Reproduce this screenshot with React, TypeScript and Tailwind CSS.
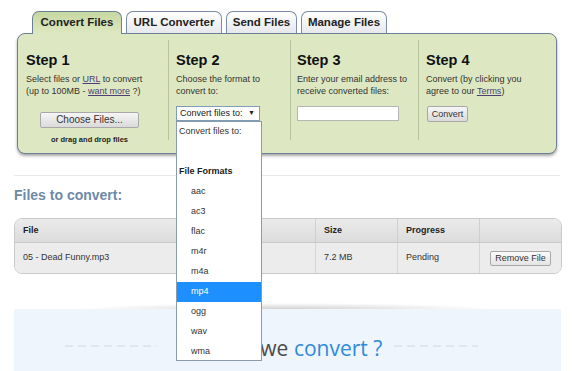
import React from 'react'

const tabs = [
  { label: 'Convert Files', w: 'w-[90px]', active: true },
  { label: 'URL Converter', w: 'w-[96px]', active: false },
  { label: 'Send Files', w: 'w-[71px]', active: false },
  { label: 'Manage Files', w: 'w-[86px]', active: false },
]

const formats = ['aac', 'ac3', 'flac', 'm4r', 'm4a', 'mp4', 'ogg', 'wav', 'wma']

function Dashes({ width }: { width: number }) {
  return (
    <svg width={width} height="2" className="block">
      <line x1="0" y1="1" x2={width} y2="1" stroke="#cfd8e2" strokeWidth="1" strokeDasharray="8 5" />
    </svg>
  )
}

export default function App() {
  return (
    <div className="relative w-[574px] h-[371px] overflow-hidden bg-white text-[#333] [font-family:'Liberation_Sans',Arial,sans-serif]">
      {/* Tabs */}
      <div className="pt-[11px]">
        <div className="flex items-start gap-[4px] pl-[32px] h-[23px]">
          {tabs.map((t) =>
            t.active ? (
              <div
                key={t.label}
                className={`relative z-10 ${t.w} h-[23px] flex items-center justify-center rounded-t-[7px] border border-b-0 border-[#6b7f98] bg-gradient-to-b from-[#c7d8a0] to-[#dde8c2] text-[11.5px] font-bold text-[#222]`}
              >
                {t.label}
              </div>
            ) : (
              <div
                key={t.label}
                className={`${t.w} h-[22px] flex items-center justify-center rounded-t-[7px] border border-b-0 border-[#7a8ca6] bg-gradient-to-b from-[#ffffff] to-[#e6e8ec] text-[11.5px] font-bold text-[#222]`}
              >
                {t.label}
              </div>
            )
          )}
        </div>

        {/* Steps panel */}
        <div className="-mt-px ml-[17px] w-[540px] h-[121px] rounded-[8px] border border-[#6b7f98] bg-[#dde8c2] pt-[6px] shadow-[0_2px_3px_rgba(0,0,0,0.35)]">
          <div className="flex h-[100px]">
            {/* Step 1 */}
            <div className="w-[150px] pl-[8px] pt-[11px]">
              <h2 className="text-[14.5px] leading-[18px] font-bold text-[#111]">Step 1</h2>
              <p className="mt-[4px] text-[9px] leading-[12px]">
                Select files or <span className="underline text-[#4d3f73]">URL</span> to convert
                <br />
                (up to 100MB - <span className="underline text-[#4d3f73]">want more</span> ?)
              </p>
              <div className="ml-[14px] mt-[9px] w-[99px]">
                <button className="w-[99px] h-[16px] border border-[#a8a8a8] rounded-[2px] bg-gradient-to-b from-[#f6f6f6] to-[#dadada] text-[10px] leading-[14px] text-[#333]">
                  Choose Files...
                </button>
                <p className="mt-[5px] text-center text-[7.5px] leading-[10px] font-bold text-[#222]">or drag and drop files</p>
              </div>
            </div>

            {/* Step 2 */}
            <div className="w-[122px] border-l border-[#b7c39d] pl-[7px] pt-[11px]">
              <h2 className="text-[14.5px] leading-[18px] font-bold text-[#111]">Step 2</h2>
              <p className="mt-[4px] text-[9px] leading-[12px]">
                Choose the format to
                <br />
                convert to:
              </p>
              <div className="relative mt-[9px] w-[84px] h-[15px] flex items-center justify-between border border-[#7f9db9] bg-white pl-[3px] pr-[4px] text-[9px] text-[#222]">
                <span>Convert files to:</span>
                <span className="text-[7px]">▼</span>
                {/* open dropdown list */}
                <div className="absolute z-20 left-[-1px] top-[14px] w-[86px] h-[240px] border border-[#8a9aaa] bg-white text-[9px] text-[#333]">
                  <div className="h-[20px] flex items-center pl-[2px]">Convert files to:</div>
                  <div className="h-[20px]" />
                  <div className="h-[20px] flex items-center pl-[2px] font-bold text-[#222]">File Formats</div>
                  {formats.map((f) => (
                    <div
                      key={f}
                      className={`h-[20px] flex items-center pl-[14px] ${f === 'mp4' ? 'bg-[#1e8fff] text-white' : ''}`}
                    >
                      {f}
                    </div>
                  ))}
                </div>
              </div>
            </div>

            {/* Step 3 */}
            <div className="w-[128px] border-l border-[#b7c39d] pl-[6px] pt-[11px]">
              <h2 className="text-[14.5px] leading-[18px] font-bold text-[#111]">Step 3</h2>
              <p className="mt-[4px] text-[9px] leading-[12px]">
                Enter your email address to
                <br />
                receive converted files:
              </p>
              <input className="mt-[9px] block w-[102px] h-[15px] border border-[#b5b5b5] bg-white" />
            </div>

            {/* Step 4 */}
            <div className="flex-1 border-l border-[#b7c39d] pl-[7px] pt-[11px]">
              <h2 className="text-[14.5px] leading-[18px] font-bold text-[#111]">Step 4</h2>
              <p className="mt-[4px] text-[9px] leading-[12px]">
                Convert (by clicking you
                <br />
                agree to our <span className="underline text-[#4d3f73]">Terms</span>)
              </p>
              <button className="mt-[9px] ml-px w-[41px] h-[16px] border border-[#a8a8a8] rounded-[2px] bg-gradient-to-b from-[#f6f6f6] to-[#dadada] text-[9px] leading-[14px] text-[#333]">
                Convert
              </button>
            </div>
          </div>
        </div>
      </div>

      {/* Files list */}
      <div className="mt-[21px] ml-[14px] w-[546px] h-px bg-[#e8e8e8]" />
      <h3 className="mt-[10px] ml-[14px] text-[14px] leading-[18px] font-bold text-[#6f8aa7]">Files to convert:</h3>

      <div className="mt-[14px] ml-[14px] w-[548px] rounded-[8px] border border-[#c9c9c9] overflow-hidden text-[9px] text-[#333]">
        <div className="flex h-[24px] bg-gradient-to-b from-[#ebebeb] to-[#dcdcdc] border-b border-[#c9c9c9] font-bold text-[#222]">
          <div className="w-[300px] flex items-center pl-[8px]">File</div>
          <div className="w-[82px] flex items-center pl-[8px] border-l border-[#cfcfcf]">Size</div>
          <div className="w-[82px] flex items-center pl-[8px] border-l border-[#cfcfcf]">Progress</div>
          <div className="flex-1 border-l border-[#cfcfcf]" />
        </div>
        <div className="flex h-[30px] bg-[#ececec]">
          <div className="w-[300px] flex items-center pl-[8px]">05 - Dead Funny.mp3</div>
          <div className="w-[82px] flex items-center pl-[8px] border-l border-[#d6d6d6]">7.2 MB</div>
          <div className="w-[82px] flex items-center pl-[8px] border-l border-[#d6d6d6]">Pending</div>
          <div className="flex-1 flex items-center pl-[10px] border-l border-[#d6d6d6]">
            <button className="w-[61px] h-[15px] border border-[#a8a8a8] rounded-[2px] bg-gradient-to-b from-[#fbfbfb] to-[#e4e4e4] text-[9px] leading-[13px] text-[#333]">
              Remove File
            </button>
          </div>
        </div>
      </div>

      {/* Bottom section */}
      <div className="mt-[29px] mx-auto w-[420px] h-[6px] bg-[radial-gradient(ellipse_at_bottom,rgba(0,0,0,0.18),rgba(0,0,0,0)_70%)]" />
      <div className="ml-[14px] w-[547px] h-[70px] bg-[#eef5fc] pt-[22px]">
        <div className="flex items-center pl-[51px]">
          <Dashes width={92} />
          <p className="ml-[19px] mt-[5px] text-[21px] leading-[24px] text-[#4a4a4a] [font-family:'Open_Sans',sans-serif]">
            <span className="tracking-[-1.4px]">What can </span>we <span className="text-[#2d8bda]">convert ?</span>
          </p>
          <div className="ml-[12px]">
            <Dashes width={84} />
          </div>
        </div>
      </div>
    </div>
  )
}
